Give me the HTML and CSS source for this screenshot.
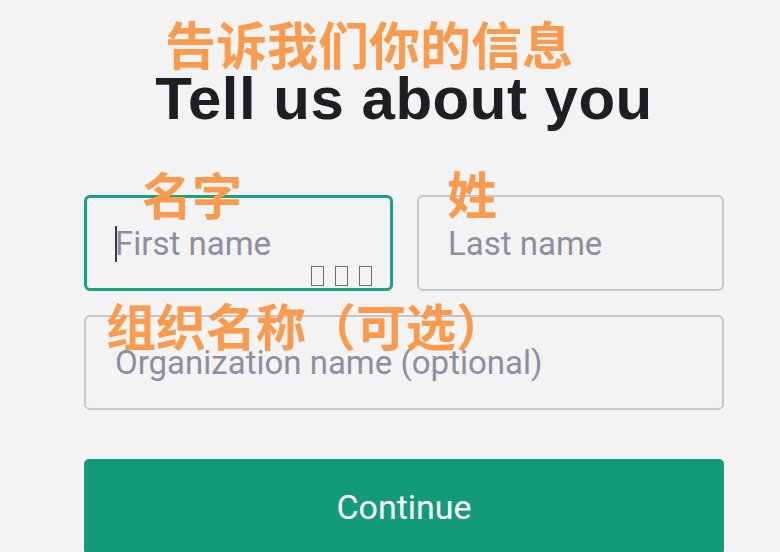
FILE: index.html
```html
<!DOCTYPE html>
<html lang="en">
<head>
  <meta charset="UTF-8">
  <title>Tell us about you</title>
  <link rel="stylesheet" href="styles.css">
</head>
<body>
  <main class="form">
    <h1 class="title">
      Tell us about you
      <span class="note note-title">告诉我们你的信息</span>
    </h1>

    <div class="name-row">
      <div class="field field-focus">
        <input type="text" placeholder="First name">
        <span class="caret"></span>
        <span class="tofu"><i></i><i></i><i></i></span>
        <span class="note note-first">名字</span>
      </div>
      <div class="field">
        <input type="text" placeholder="Last name">
        <span class="note note-last">姓</span>
      </div>
    </div>

    <div class="field field-org">
      <input type="text" placeholder="Organization name (optional)">
      <span class="note note-org">组织名称（可选）</span>
    </div>

    <button class="continue-btn">Continue</button>
  </main>
</body>
</html>
```

FILE: styles.css
```css
* {
  box-sizing: border-box;
}

body {
  margin: 0;
  background: #f3f3f4;
  font-family: Roboto, 'Liberation Sans', sans-serif;
  color: #202123;
  overflow: hidden;
}

.form {
  width: 640px;
  margin-left: 84px;
  padding-top: 64px;
}

.title {
  position: relative;
  margin: 0;
  font-family: 'Liberation Sans', Arial, sans-serif;
  font-size: 60px;
  line-height: 70px;
  font-weight: 700;
  text-align: center;
  color: #1d1f23;
  letter-spacing: 0.5px;
}

.note {
  position: absolute;
  font-family: 'Noto Sans CJK SC', sans-serif;
  font-weight: 700;
  font-size: 50px;
  line-height: 50px;
  color: #f99a4c;
  white-space: nowrap;
  letter-spacing: 0;
  text-align: left;
}

.note-title {
  top: -46px;
  left: 81px;
  font-size: 51px;
}

.name-row {
  display: flex;
  gap: 24px;
  margin-top: 61px;
}

.field {
  position: relative;
  flex: 1;
  height: 96px;
  border: 2px solid #c5c5cc;
  border-radius: 6px;
}

.field-focus {
  border: 3px solid #16a37f;
}

.field input {
  width: 100%;
  height: 100%;
  border: none;
  outline: none;
  background: transparent;
  padding: 0 0 0 29px;
  font-family: Roboto, sans-serif;
  font-size: 33px;
  color: #202123;
}

.field-focus input {
  padding-left: 28px;
}

.field input::placeholder {
  color: #8e8ea0;
}

.caret {
  position: absolute;
  left: 28px;
  top: 28px;
  width: 2px;
  height: 36px;
  background: #3a3a4a;
}

.tofu {
  position: absolute;
  left: 224px;
  top: 68px;
  display: flex;
  gap: 11px;
}

.tofu i {
  display: block;
  width: 13px;
  height: 20px;
  border: 1px solid #6e6e6e;
}

.note-first {
  top: -30px;
  left: 55px;
}

.note-last {
  top: -30px;
  left: 28px;
}

.field-org {
  margin-top: 24px;
  height: 95px;
}

.note-org {
  top: -18px;
  left: 20px;
}

.continue-btn {
  display: block;
  width: 100%;
  height: 96px;
  margin-top: 49px;
  border: none;
  border-radius: 5px;
  background: #139b77;
  color: #fff;
  font-family: Roboto, sans-serif;
  font-size: 34px;
  cursor: pointer;
}
```
